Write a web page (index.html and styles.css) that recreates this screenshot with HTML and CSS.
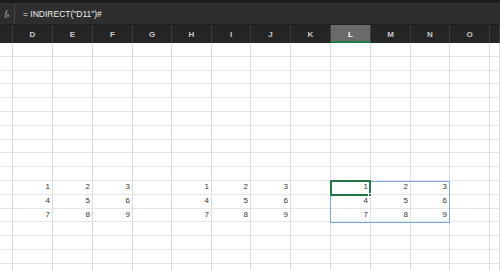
FILE: index.html
```html
<!DOCTYPE html>
<html>
  <head>
    <meta charset="utf-8">
    <title>INDIRECT spill</title>
    <link rel="stylesheet" href="styles.css">
  </head>
  <body>
    <div class="topbar"></div>
    <div class="formula-bar">
      <div class="fx"><i>f</i><span>x</span></div>
      <div class="formula">= INDIRECT("D11")#</div>
    </div>
    <div class="sheet">
      <table class="grid">
        <colgroup>
          <col class="w13"><col class="w40"><col class="w40"><col class="w40">
          <col class="w39"><col class="w40"><col class="w39"><col class="w40">
          <col class="w40"><col class="w40"><col class="w40"><col class="w39">
          <col class="w40"><col class="w10">
        </colgroup>
        <thead>
          <tr><th></th><th>D</th><th>E</th><th>F</th><th>G</th><th>H</th><th>I</th><th>J</th><th>K</th><th class="sel">L</th><th>M</th><th>N</th><th>O</th><th></th></tr>
        </thead>
        <tbody>
          <tr><td></td><td></td><td></td><td></td><td></td><td></td><td></td><td></td><td></td><td></td><td></td><td></td><td></td><td></td></tr>
          <tr><td></td><td></td><td></td><td></td><td></td><td></td><td></td><td></td><td></td><td></td><td></td><td></td><td></td><td></td></tr>
          <tr><td></td><td></td><td></td><td></td><td></td><td></td><td></td><td></td><td></td><td></td><td></td><td></td><td></td><td></td></tr>
          <tr><td></td><td></td><td></td><td></td><td></td><td></td><td></td><td></td><td></td><td></td><td></td><td></td><td></td><td></td></tr>
          <tr><td></td><td></td><td></td><td></td><td></td><td></td><td></td><td></td><td></td><td></td><td></td><td></td><td></td><td></td></tr>
          <tr><td></td><td></td><td></td><td></td><td></td><td></td><td></td><td></td><td></td><td></td><td></td><td></td><td></td><td></td></tr>
          <tr><td></td><td></td><td></td><td></td><td></td><td></td><td></td><td></td><td></td><td></td><td></td><td></td><td></td><td></td></tr>
          <tr><td></td><td></td><td></td><td></td><td></td><td></td><td></td><td></td><td></td><td></td><td></td><td></td><td></td><td></td></tr>
          <tr><td></td><td></td><td></td><td></td><td></td><td></td><td></td><td></td><td></td><td></td><td></td><td></td><td></td><td></td></tr>
          <tr><td></td><td></td><td></td><td></td><td></td><td></td><td></td><td></td><td></td><td></td><td></td><td></td><td></td><td></td></tr>
          <tr><td></td><td>1</td><td>2</td><td>3</td><td></td><td>1</td><td>2</td><td>3</td><td></td><td>1</td><td>2</td><td>3</td><td></td><td></td></tr>
          <tr><td></td><td>4</td><td>5</td><td>6</td><td></td><td>4</td><td>5</td><td>6</td><td></td><td>4</td><td>5</td><td>6</td><td></td><td></td></tr>
          <tr><td></td><td>7</td><td>8</td><td>9</td><td></td><td>7</td><td>8</td><td>9</td><td></td><td>7</td><td>8</td><td>9</td><td></td><td></td></tr>
          <tr><td></td><td></td><td></td><td></td><td></td><td></td><td></td><td></td><td></td><td></td><td></td><td></td><td></td><td></td></tr>
          <tr><td></td><td></td><td></td><td></td><td></td><td></td><td></td><td></td><td></td><td></td><td></td><td></td><td></td><td></td></tr>
          <tr><td></td><td></td><td></td><td></td><td></td><td></td><td></td><td></td><td></td><td></td><td></td><td></td><td></td><td></td></tr>
          <tr><td></td><td></td><td></td><td></td><td></td><td></td><td></td><td></td><td></td><td></td><td></td><td></td><td></td><td></td></tr>
        </tbody>
      </table>
      <div class="spill-range"></div>
      <div class="active-cell"></div>
    </div>
  </body>
</html>
```

FILE: styles.css
```css
body{margin:0; background:#ffffff; font-family:"Liberation Sans", Arial, sans-serif; overflow:hidden;}

.topbar{height:3px; background:#1c1c1c;}

.formula-bar{display:flex; height:21px; background:#2e2e2e; border-bottom:1px solid #1f1f1f;}
.fx{width:14px; border-right:1px solid #444444; color:#d0d0d0; font-family:"Liberation Serif", serif; font-size:8px; display:flex; align-items:center; justify-content:center;}
.fx span{font-size:5px; margin-top:3px; font-family:"Liberation Sans", sans-serif;}
.formula{padding-left:8px; color:#ececec; font-size:8.5px; display:flex; align-items:center;}

.sheet{position:relative;}

.grid{table-layout:fixed; border-collapse:separate; border-spacing:0; width:500px;}
.w13{width:13px;}
.w40{width:40px;}
.w39{width:39px;}
.w10{width:10px;}

.grid th{height:18px; box-sizing:border-box; padding:0; background:#252525; border-right:1px solid #3b3b3b; color:#c8c8c8; font-size:8px; font-weight:bold; text-align:center; vertical-align:middle;}
.grid th.sel{background:#6a6a6a; color:#ffffff; border-bottom:2px solid #1f7a45; padding-top:2px;}

.grid td{height:13.8px; box-sizing:border-box; padding:0 2px 0 0; border-right:1px solid #dddddd; border-bottom:1px solid #e6e6e6; color:#333333; font-size:8px; line-height:10px; text-align:right; vertical-align:middle;}

.spill-range{position:absolute; left:330px; top:156px; width:120px; height:42px; box-sizing:border-box; border:1px solid #7fa3dc;}
.active-cell{position:absolute; left:330px; top:155px; width:41px; height:16px; box-sizing:border-box; border:2px solid #1f7a45;}
.active-cell::after{content:""; position:absolute; right:-3px; bottom:-3px; width:4px; height:4px; background:#1f7a45; border:1px solid #ffffff; box-sizing:border-box;}
```
